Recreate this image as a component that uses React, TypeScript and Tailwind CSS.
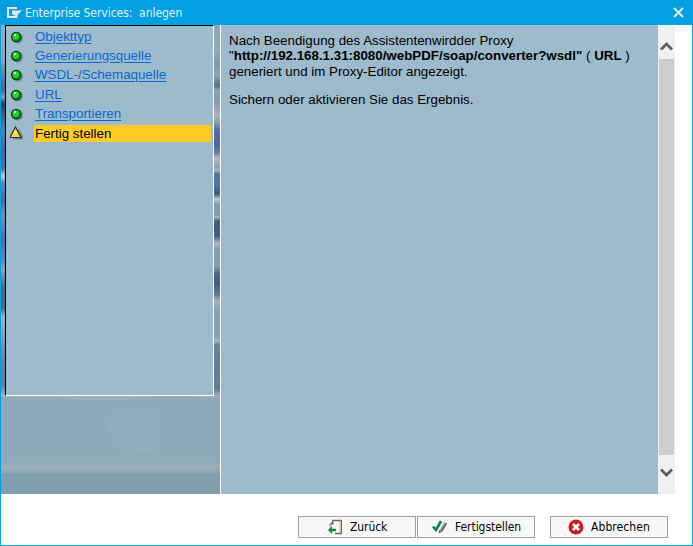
import React from "react";

const steps = ["Objekttyp", "Generierungsquelle", "WSDL-/Schemaquelle", "URL", "Transportieren"];

function Led() {
  return (
    <svg className="shrink-0" width="14" height="14" viewBox="0 0 14 14">
      <circle cx="7.8" cy="8.2" r="5.2" fill="#70879a" />
      <circle cx="6.2" cy="7" r="5.2" fill="#00300a" />
      <circle cx="6.2" cy="7" r="4.2" fill="#079a16" />
      <circle cx="5.8" cy="6.4" r="3.1" fill="#20d824" />
      <rect x="4" y="4" width="2" height="2" fill="#d8ffd0" />
    </svg>
  );
}

function Warning() {
  return (
    <svg className="shrink-0" width="14" height="14" viewBox="0 0 14 14">
      <path d="M7 3 L9 3 L13 10 V13.5 H3Z" fill="#70879a" />
      <path d="M5.5 1 L11 11.5 H0Z" fill="#ffd93b" stroke="#302800" strokeWidth="1.1" />
      <path d="M5.5 3 V7 L3 9.5Z" fill="#fff7a8" />
    </svg>
  );
}

function BackIcon() {
  return (
    <svg width="15" height="16" viewBox="0 0 15 16">
      <path d="M4 1.5 H13.3 V14.5 H7" fill="none" stroke="#6b6b6b" strokeWidth="1.4" />
      <path d="M1.5 5.5 L5.5 1 V5.5Z" fill="#666" />
      <path d="M2 5 V8" stroke="#777" />
      <path d="M12 2 V13.5" stroke="#eabf85" />
      <path d="M0 11 L4 7 V9.8 H8 V12.2 H4 V15Z" fill="#078b3f" />
    </svg>
  );
}

function FinishIcon() {
  return (
    <svg width="16" height="16" viewBox="0 0 16 16">
      <path d="M1 7.5 L4 11 L9 2" fill="none" stroke="#078b45" strokeWidth="2.6" />
      <path d="M14 4 L9 12" stroke="#646464" strokeWidth="3" />
      <path d="M13.2 4 L8.4 11.5" stroke="#b5b5b5" strokeWidth="1" />
      <path d="M7.3 11 L6.5 14.5 L9.8 12.8Z" fill="#555" />
    </svg>
  );
}

function CancelIcon() {
  return (
    <svg width="16" height="16" viewBox="0 0 16 16">
      <circle cx="8" cy="8" r="7.5" fill="#cc1d24" />
      <path d="M5 5 L11 11 M11 5 L5 11" stroke="white" strokeWidth="2.7" />
    </svg>
  );
}

function Action({ icon, label, pad, spacing }: { icon: React.ReactNode; label: string; pad: string; spacing: string }) {
  return (
    <button className={`flex h-[22px] w-[118px] items-center gap-[7px] border border-[#a0a0a0] bg-[#f7f7f7] font-['DejaVu_Sans_Condensed','DejaVu_Sans',sans-serif] text-[12px] leading-none whitespace-nowrap text-black ${pad}`}>
      {icon}
      <span className={spacing}>{label}</span>
    </button>
  );
}

function Backdrop() {
  return (
    <svg className="block" width="219" height="98" viewBox="0 0 219 98">
      <defs>
        <pattern id="grain" width="4" height="4" patternUnits="userSpaceOnUse">
          <rect width="1" height="1" fill="#c4b5b0" />
          <rect x="2" y="2" width="1" height="1" fill="#a9bbc9" />
        </pattern>
        <linearGradient id="band" x1="0" y1="0" x2="0" y2="1">
          <stop offset="0" stopColor="#8faab8" />
          <stop offset=".45" stopColor="#9cafba" />
          <stop offset="1" stopColor="#8ca7b4" />
        </linearGradient>
      </defs>
      <rect width="219" height="98" fill="#8faab8" />
      <path d="M45 0 H150 L125 4 H75Z" fill="#a1b0bb" />
      <path d="M0 0 H45 L60 2 L0 1Z M190 0 H219 V2Z" fill="#9cb0bc" />
      <path d="M103 24 L116 15 L155 11 V55 L121 57Z" fill="url(#grain)" opacity=".7" />
      <rect y="66" width="219" height="11" fill="url(#band)" />
      <rect y="68" width="219" height="7" fill="url(#grain)" opacity=".5" />
      <rect y="77" width="219" height="21" fill="#819ead" />
      <rect y="79" width="219" height="3" fill="#829bb3" opacity=".7" />
    </svg>
  );
}

export default function App() {
  return (
    <div className="flex h-[546px] w-[693px] flex-col overflow-hidden border-x border-b border-[#00a0e3] bg-white font-['Liberation_Sans',Arial,sans-serif] text-[13.33px] text-black">
      <header className="flex h-[25px] shrink-0 items-center bg-[#00a0e3] pl-[6px] font-['DejaVu_Sans_Condensed','DejaVu_Sans',sans-serif] text-[12px] text-[#e4f3fa]">
        <svg width="15" height="12" viewBox="0 0 15 12">
          <path d="M10 1 H1 V10 H9.5 V8" fill="none" stroke="#e6e6e6" strokeWidth="2" />
          <path d="M5 3.5 H15 L10 8.5 H7 L5 6.5Z" fill="#e6e6e6" />
        </svg>
        <span className="ml-[3px] whitespace-pre tracking-[-0.04px]">Enterprise Services:  anlegen</span>
        <svg className="mr-[8px] ml-auto" width="11" height="11" viewBox="0 0 11 11">
          <path d="M1 1 L10 10 M10 1 L1 10" stroke="#e9edf0" strokeWidth="2" />
        </svg>
      </header>
      <main className="flex h-[469px] shrink-0">
        <aside className="flex h-full w-[219px] flex-col">
          <div className="flex h-[371px]">
            <div className="w-[4px] bg-[linear-gradient(to_bottom,#98adbc_0px,#8ca2b8_35px,#617da3_50px,#4a6795_65px,#899eb4_72px,#24415f_79px,#395777_86px,#607da9_105px,#48669a_125px,#56749f_144px,#c0c7cf_151px,#6684b5_158px,#4d6b9b_175px,#7491b4_190px,#516fa4_215px,#6684af_235px,#8aa2b8_245px,#486888_263px,#4b6b8b_283px,#a2b2be_292px,#829fb1_310px,#647f99_340px,#63809c_360px,#aab4bd_371px)]" />
            <nav className="w-[209px] border border-t-black border-r-white border-b-white border-l-black bg-[#9dbbcc] pt-px pr-[2px] pl-[4px]">
              {steps.map((step) => (
                <div className="flex h-[19.3px] items-center" key={step}>
                  <Led />
                  <a href="#" className="ml-[11px] text-[#0867d2] underline underline-offset-2">{step}</a>
                </div>
              ))}
              <div className="flex h-[20px] items-center">
                <Warning />
                <span className="mt-px ml-[10px] h-[17px] flex-1 bg-[#ffcc27] pl-[1px] leading-[17px]">Fertig stellen</span>
              </div>
            </nav>
            <div className="w-[6px] bg-[linear-gradient(to_bottom,#8ca5b4_0px,#94aabb_25px,#7e98b4_38px,#8ea4b6_50px,#566f95_61px,#8ea5b5_65px,#8197bb_75px,#b1afb7_90px,#8aa5b3_96px,#5370a3_105px,#4767a6_120px,#657fb0_128px,#bab9bf_133px,#8aa5b3_143px,#b6b7bd_145px,#5573a9_149px,#5875a5_160px,#3e5b83_169px,#c4cbd1_174px,#7e9eb3_179px,#7f9fb3_190px,#aab8c1_192px,#3f5e82_196px,#3e5d83_211px,#aab4bf_218px,#829eb1_225px,#85a2b3_241px,#4e6c8e_248px,#3d5a80_258px,#617da0_270px,#a7b3bd_276px,#85a3b5_285px,#85a3b3_311px,#a4b5be_316px,#67839b_320px,#637f99_340px,#617b9b_364px,#aab4bd_371px)]" />
          </div>
          <Backdrop />
        </aside>
        <section className="flex-1 border-l border-white bg-[#9dbbcc] pt-[8px] pl-[8px] leading-[15.4px] whitespace-nowrap">
          <p>Nach Beendigung des Assistentenwirdder Proxy<br />"<b>http://192.168.1.31:8080/webPDF/soap/converter?wsdl"</b> ( <b>URL</b> )<br />generiert und im Proxy-Editor angezeigt.</p>
          <p className="mt-[12.4px]">Sichern oder aktivieren Sie das Ergebnis.</p>
        </section>
        <div className="mr-[17px] flex w-[17px] flex-col items-center bg-[#f0f0f0]">
          <svg className="h-[34px] w-[17px] shrink-0" viewBox="0 0 17 34"><path d="M3 24.5 L8.5 19 L14 24.5" fill="none" stroke="#606060" strokeWidth="2.8" /></svg>
          <div className="h-[396px] w-[15px] bg-[#cdcdcd]" />
          <svg className="h-[39px] w-[17px] shrink-0" viewBox="0 0 17 39"><path d="M3 14.5 L8.5 20 L14 14.5" fill="none" stroke="#606060" strokeWidth="2.8" /></svg>
        </div>
      </main>
      <footer className="flex pt-[22px] pl-[297px]">
        <Action icon={<BackIcon />} label="Zurück" pad="pl-[29px]" spacing="tracking-[-0.08px]" />
        <div className="ml-px"><Action icon={<FinishIcon />} label="Fertigstellen" pad="pl-[14px]" spacing="tracking-[-0.05px]" /></div>
        <div className="ml-[15px]"><Action icon={<CancelIcon />} label="Abbrechen" pad="pl-[17px]" spacing="tracking-[0.08px]" /></div>
      </footer>
    </div>
  );
}
